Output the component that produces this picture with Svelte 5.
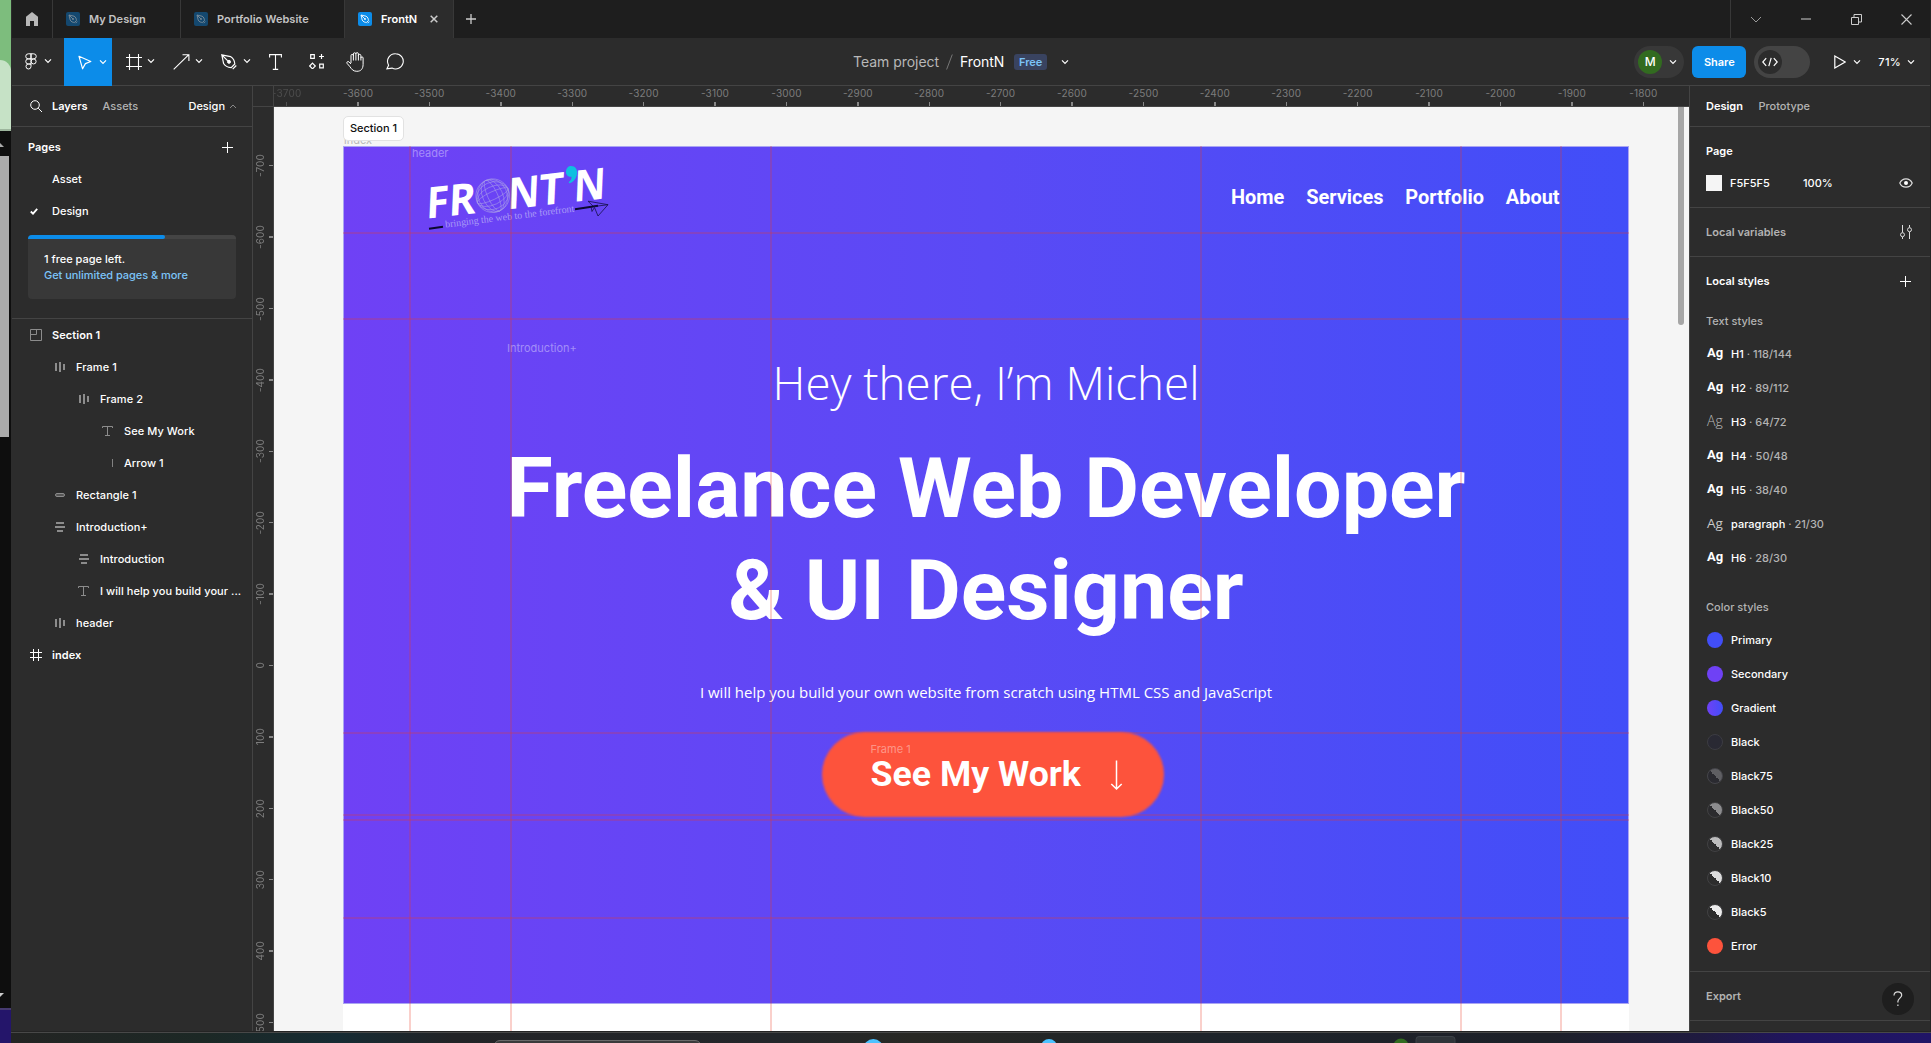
<script>
  const tabs = [
    { name: 'My Design', cls: 't1' },
    { name: 'Portfolio Website', cls: 't2' },
    { name: 'FrontN', cls: 't3', active: true }
  ];
  const layers = [
    { name: 'Section 1', icon: 'section', depth: 0, bold: true },
    { name: 'Frame 1', icon: 'cols', depth: 1 },
    { name: 'Frame 2', icon: 'cols', depth: 2 },
    { name: 'See My Work', icon: 'text', depth: 3 },
    { name: 'Arrow 1', icon: 'line', depth: 3 },
    { name: 'Rectangle 1', icon: 'rect', depth: 1 },
    { name: 'Introduction+', icon: 'rows', depth: 1 },
    { name: 'Introduction', icon: 'rows', depth: 2 },
    { name: 'I will help you build your ...', icon: 'text', depth: 2 },
    { name: 'header', icon: 'cols', depth: 1 },
    { name: 'index', icon: 'frame', depth: 0, bold: true }
  ];
  const textStyles = [
    { name: 'H1', size: '118/144', w: 'bold' },
    { name: 'H2', size: '89/112', w: 'bold' },
    { name: 'H3', size: '64/72', w: 'light' },
    { name: 'H4', size: '50/48', w: 'bold' },
    { name: 'H5', size: '38/40', w: 'bold' },
    { name: 'paragraph', size: '21/30', w: 'regular' },
    { name: 'H6', size: '28/30', w: 'bold' }
  ];
  const colors = [
    ['Primary', 'primary'], ['Secondary', 'secondary'], ['Gradient', 'gradient'], ['Black', 'black'],
    ['Black75', 'half b75'], ['Black50', 'half b50'], ['Black25', 'half b25'], ['Black10', 'half b10'],
    ['Black5', 'half b5'], ['Error', 'error']
  ];
  const hTicks = Array.from({ length: 20 }, (_, i) => -3700 + i * 100);
  const vTicks = Array.from({ length: 13 }, (_, i) => -700 + i * 100);
  const vGuides = [409.5, 510.5, 770.5, 1200.5, 1460.5, 1560.5];
  const hGuides = [232, 318, 732, 814, 819, 917];
</script>

{#snippet chev()}
  <svg class="chev" width="8" height="6" viewBox="0 0 8 6"><path d="M1 1.3 4 4.3 7 1.3" /></svg>
{/snippet}

<div class="screen">
  <div class="behind">
    <div class="green"><div class="blob"></div></div>
    <div class="dark1"><svg width="11" height="26"><path d="M0 12 4 16H0Z" fill="#aaa" /></svg></div>
    <div class="grey"></div>
    <div class="dark2"><svg width="11" height="20"><path d="M0 2H4L0 6Z" fill="#ccc" /></svg></div>
    <div class="violet"></div>
  </div>

  <div class="app">
    <div class="titlebar">
      <div class="home">
        <svg width="12" height="14" viewBox="0 0 12 14"><path d="M6 0 12 4.8V14H8V9H4V14H0V4.800Z" fill="#b8b8b8" /></svg>
      </div>
      {#each tabs as t}
        <div class="tab {t.cls}" class:active={t.active}>
          <svg class="fileicon" width="14" height="14" viewBox="0 0 14 14">
            <rect width="14" height="14" rx="2" class="fi-bg" />
            <path class="fi-pen" d="M3 3 8 4.200C9.800 5 10.500 7 10.400 8.600L8.600 10.400C7 10.500 5 9.800 4.200 8ZM3.200 3.200 6.800 6.800M9.600 11.200 11.200 9.600" />
            <circle cx="7" cy="7" r=".9" class="fi-dot" />
          </svg>
          <span>{t.name}</span>
          {#if t.active}
            <svg class="close" width="8" height="8" viewBox="0 0 8 8"><path d="M.7.7 7.300 7.300M7.300.7.7 7.300" stroke="#ccc" stroke-width="1.500" /></svg>
          {/if}
        </div>
      {/each}
      <div class="newtab"><svg width="10" height="10"><path d="M5 0V10M0 5H10" stroke="#ccc" stroke-width="1.300" /></svg></div>
      <div class="winctl">
        <span><svg width="12" height="7"><path d="M1 1 6 6 11 1" fill="none" stroke="#999" /></svg></span>
        <span><svg width="10" height="2"><path d="M0 1H10" stroke="#ccc" /></svg></span>
        <span><svg width="11" height="11"><path d="M.5 3.500H7.500V10.500H.5ZM3 3V.5H10.500V8H8" fill="none" stroke="#ccc" /></svg></span>
        <span><svg width="11" height="11"><path d="M.5.5 10.500 10.500M10.500.5.5 10.500" stroke="#ccc" stroke-width="1.100" /></svg></span>
      </div>
    </div>

    <div class="toolbar">
      <div class="tools">
        <div class="tool wide">
          <svg width="12" height="17" viewBox="0 0 12 17"><path d="M6 .8H3.300a2.400 2.400 0 0 0 0 5.100H6ZM6 .8H8.700a2.400 2.400 0 0 1 0 5.100H6ZM6 5.900H3.300a2.400 2.400 0 0 0 0 5.100H6ZM6 11H3.300A2.500 2.500 0 1 0 6 13.500Z" /><circle cx="8.600" cy="8.450" r="2.500" /></svg>
          {@render chev()}
        </div>
        <div class="tool sel">
          <svg width="14" height="15" viewBox="0 0 14 15"><path d="M1 1.300 12.800 6.500 7.400 8.600 4.600 13.800Z" stroke-linejoin="round" stroke-width="1.200" /></svg>
          {@render chev()}
        </div>
        <div class="tool frame">
          <svg width="16" height="16" viewBox="0 0 16 16"><path d="M3.500 0V16M12.500 0V16M0 3.500H16M0 12.500H16" stroke-width="1.100" /></svg>
          {@render chev()}
        </div>
        <div class="tool">
          <svg width="17" height="16" viewBox="0 0 17 16"><path d="M.7 15.300 15.800.7M9.500.7H15.900V7" stroke-width="1.100" /></svg>
          {@render chev()}
        </div>
        <div class="tool">
          <svg width="16" height="16" viewBox="0 0 16 16"><path d="M.8.8 9.500 2.600C12.300 4.200 13.600 7.200 13.800 10L10.200 13.600C7.300 13.400 4.200 12.300 2.600 9.500ZM.8.8 6.800 6.800M15.300 11.500 11.700 15.100" stroke-width="1.200" /><circle cx="8" cy="7.800" r="1.500" fill="#fff" /></svg>
          {@render chev()}
        </div>
        <div class="tool one"><svg width="13" height="16" viewBox="0 0 13 16"><path d="M.6 3.500V.6H12.400V3.500M6.500.6V15.400M3.800 15.400H9.200" stroke-width="1.100" /></svg></div>
        <div class="tool one res"><svg width="16" height="15" viewBox="0 0 16 15"><path d="M1.700.7H5.300V4.300H1.700ZM10.700 10.200H14.300V13.800H10.700ZM3.500 9.200 6.300 12 3.500 14.800.7 12ZM12.500 0V5M10 2.500H15" stroke-width="1.200" /></svg></div>
        <div class="tool one"><svg width="18" height="20" viewBox="0 0 18 20"><path d="M5 11V3.600a1.150 1.150 0 0 1 2.400 0V2a1.200 1.200 0 0 1 2.500 0V1.900a1.200 1.200 0 0 1 2.500 0V3.500a1.150 1.150 0 0 1 2.500.2V6a1.100 1.100 0 0 1 2.200 0V12.500C17 16.800 15 19.300 10.800 19.300 7 19.300 5.500 17 4 14.800L1 11.300C.3 10 1.900 9 3 9.900L5 12M7.400 3V8.500M9.900 2V8.500M12.400 3V8.500M14.900 6V8.500" /></svg></div>
        <div class="tool one"><svg width="18" height="17" viewBox="0 0 18 17"><path d="M9.600.7A7.650 7.650 0 1 1 6 15.100L.9 15.900 2.600 12.200A7.650 7.650 0 0 1 9.600.7Z" stroke-width="1.100" /></svg></div>
      </div>
      <div class="crumb">
        <span class="team">Team project</span><svg class="slash" width="7" height="16"><path d="M.6 15.500 6.300.5" stroke="#777" fill="none" /></svg><span class="file">FrontN</span><span class="free">Free</span>{@render chev()}
      </div>
      <div class="actions">
        <div class="user"><span class="avatar">M</span>{@render chev()}</div>
        <div class="share">Share</div>
        <div class="devmode"><span class="knob"><svg width="16" height="10" viewBox="0 0 16 10"><path d="M4.200 1.200.8 5 4.200 8.800M11.800 1.200 15.200 5 11.800 8.800M9.200.8 6.800 9.200" stroke-width="1.200" /></svg></span></div>
        <div class="play"><svg width="12" height="14" viewBox="0 0 12 14"><path d="M.8 1 11.200 7 .8 13Z" stroke-width="1.200" /></svg>{@render chev()}</div>
        <div class="zoom"><span>71%</span>{@render chev()}</div>
      </div>
    </div>

    <div class="main">
      <aside class="left">
        <div class="lhead">
          <svg width="13" height="13" viewBox="0 0 13 13"><circle cx="5" cy="5" r="4.300" /><path d="M8.200 8.200 12 12" /></svg>
          <span class="b">Layers</span><span class="dim b assets">Assets</span>
          <span class="pg">Design<svg width="8" height="5"><path d="M1 4 4 1 7 4" stroke="#888" fill="none" /></svg></span>
        </div>
        <div class="pages">
          <div class="phead"><span>Pages</span><svg width="11" height="11"><path d="M5.500 0V11M0 5.500H11" /></svg></div>
          <div class="page"><span>Asset</span></div>
          <div class="page"><svg width="8" height="7"><path d="M.8 3.500 3 5.700 7.200.8" stroke-width="1.800" /></svg><span>Design</span></div>
          <div class="card">
            <div class="bar"><div class="fill"></div></div>
            <p>1 free page left.</p>
            <p class="link">Get unlimited pages &amp; more</p>
          </div>
        </div>
        <div class="layers">
          {#each layers as l}
            <div class="layer d{l.depth}" class:bold={l.bold}>
              <svg class="li" width="12" height="12" viewBox="0 0 12 12">
                {#if l.icon === 'section'}<path d="M.5.5H11.500V11.500H.5ZM6.500.5V5.500H.5" />
                {:else if l.icon === 'cols'}<path d="M2 2V10M6 1V11M10 3V9" stroke-width="2" />
                {:else if l.icon === 'rows'}<path d="M2 2H10M1 6H11M3 10H9" stroke-width="2" />
                {:else if l.icon === 'text'}<path d="M.5 3V1.500H10.500V3M5.500 1.500V10.500M3 10.500H8" />
                {:else if l.icon === 'line'}<path d="M10.500 2V10" stroke-width=".9" />
                {:else if l.icon === 'rect'}<rect x="1.500" y="4.500" width="9" height="3" rx="1.500" fill="#555" />
                {:else}<path class="white" d="M3.500 0V12M8.500 0V12M0 3.500H12M0 8.500H12" />{/if}
              </svg>
              <span>{l.name}</span>
            </div>
          {/each}
        </div>
      </aside>

      <div class="work">
        <div class="hruler">
          <div class="corner"></div>
          <div class="hticks">
            {#each hTicks as n}<div class="ht" class:faded={n === -3700}><span>{n}</span><i></i></div>{/each}
          </div>
        </div>
        <div class="wrow">
          <div class="vruler">
            {#each vTicks as n}<div class="vt"><span>{n}</span><i></i></div>{/each}
          </div>
          <div class="canvas">
            <span class="lbl index">index</span>
            <span class="chip">Section 1</span>
            <div class="paper"></div>
            <div class="hero">
              <span class="lbl hdr">header</span>
              <span class="lbl intro">Introduction+</span>
              <svg class="logo" width="190" height="76" viewBox="420 158 190 76">
                <g class="word" transform="translate(429.200 218.300) rotate(-6.500) skewX(-9)">
                  <text x="-3.500" y="0" textLength="50" lengthAdjust="spacingAndGlyphs">FR</text>
                  <text x="78.500" y="0" textLength="32" lengthAdjust="spacingAndGlyphs">N</text>
                  <text x="110" y="0" textLength="25" lengthAdjust="spacingAndGlyphs">T</text>
                  <text x="145" y="0" textLength="32" lengthAdjust="spacingAndGlyphs">N</text>
                </g>
                <path d="M571 166C575.500 166 577.500 169.500 577 173.500 576.500 178.500 573.500 182 569.500 183.200L568.600 182.300C571 180.500 571.800 178.500 571.500 176.800 568.500 177.200 565.800 175 566 171.500 566.200 168 568.500 166 571 166Z" fill="#0fbfe0" />
                <g class="globe" transform="rotate(-25 492.700 195.700)">
                  <circle cx="492.700" cy="195.700" r="16.800" />
                  <ellipse cx="492.700" cy="195.700" rx="5" ry="16.800" /><ellipse cx="492.700" cy="195.700" rx="10" ry="16.800" /><ellipse cx="492.700" cy="195.700" rx="14.500" ry="16.800" />
                  <ellipse cx="492.700" cy="195.700" rx="16.800" ry="4" /><ellipse cx="492.700" cy="195.700" rx="16.800" ry="9" /><ellipse cx="492.700" cy="195.700" rx="16.800" ry="13.500" />
                </g>
                <text class="tag" transform="translate(445.500 227.500) rotate(-7)" textLength="130">bringing the web to the forefront</text>
                <path d="M429 228.700 443 226.700M575 209.300 598 205.800" stroke="#0b0930" stroke-width="2" />
                <path d="M594 206.500 608 204.700 598 216 594.500 207.500 592 211.500 591 206.500M588 201.200 608 204.700M588 201.200 593 206" stroke="#15104a" stroke-width=".8" fill="none" />
              </svg>
              <nav><span>Home</span><span>Services</span><span>Portfolio</span><span>About</span></nav>
              <div class="hey">Hey there, I’m Michel</div>
              <h1>Freelance Web Developer<br />&amp; UI Designer</h1>
              <div class="para">I will help you build your own website from scratch using HTML CSS and JavaScript</div>
            </div>
            <svg class="guides" width="1415" height="924" viewBox="274 107 1415 924">
              {#each vGuides as x}<path d="M{x + 0.5} 146V1031" />{/each}
              {#each hGuides as y}<path d="M343 {y + 1}H1629" />{/each}
            </svg>
            <div class="pill"></div>
            <span class="lbl f1">Frame 1</span>
            <div class="cta">See My Work</div>
            <svg class="down" width="14" height="32" viewBox="0 0 14 32"><path d="M6.500.5V29M1.300 24 6.500 29 11.700 24" fill="none" stroke="#fff" stroke-width="1.500" /></svg>
            <div class="scroll"></div>
          </div>
        </div>
      </div>

      <aside class="right">
        <div class="rhead"><span class="b">Design</span><span class="b dim">Prototype</span></div>
        <div class="sec">
          <div class="row b">Page</div>
          <div class="row fillrow"><i class="sw"></i><span class="hex">F5F5F5</span><span>100%</span>
            <svg class="eye" width="14" height="10" viewBox="0 0 14 10"><path d="M.8 5C2 2.300 4.300.8 7 .8S12 2.300 13.200 5C12 7.700 9.700 9.200 7 9.200S2 7.700.8 5Z" stroke-width="1.200" /><circle cx="7" cy="5" r="2" fill="#fff" stroke="none" /></svg>
          </div>
        </div>
        <div class="sec">
          <div class="row b dim">Local variables
            <svg width="12" height="14" viewBox="0 0 12 14"><path d="M2.500 0V7.500M2.500 12V14M9.500 0V2.500M9.500 7V14" /><circle cx="2.500" cy="9.700" r="2" /><circle cx="9.500" cy="4.700" r="2" /></svg>
          </div>
        </div>
        <div class="sec">
          <div class="row b">Local styles<svg class="plus" width="11" height="11"><path d="M5.500 0V11M0 5.500H11" stroke="#fff" /></svg></div>
          <div class="row dim sub">Text styles</div>
          {#each textStyles as s}
            <div class="style"><span class="ag {s.w}">Ag</span><span>{s.name}<em>{`\u00a0· ${s.size}`}</em></span></div>
          {/each}
          <div class="row dim sub2">Color styles</div>
          {#each colors as [n, c]}
            <div class="style"><i class="dot {c}"></i><span>{n}</span></div>
          {/each}
        </div>
        <div class="sec"><div class="row b dim">Export</div></div>
        <div class="help"><svg width="10" height="16" viewBox="0 0 10 16"><path d="M1 4.500C1 2 2.600.8 4.800.8S8.700 2.200 8.700 4.300C8.700 7 4.900 7.300 4.900 10.500V11.500M4.900 13.500V15" stroke-width="1.200" /></svg></div>
      </aside>
    </div>
  </div>

  <div class="taskbar">
    <svg width="1931" height="11" viewBox="0 1032 1931 11">
      <rect x="494" y="1040.500" width="207" height="14" rx="6" fill="#3a3a3b" stroke="#6a6a6a" />
      <circle cx="873.300" cy="1049" r="10" fill="#4cc2ff" /><circle cx="1049" cy="1047" r="8" fill="#4cc2ff" />
      <circle cx="1401" cy="1046" r="7.500" fill="#326b20" />
      <rect x="1416" y="1036.500" width="39" height="14" rx="3" fill="#2f3439" stroke="#3c4147" />
    </svg>
  </div>
</div>

<style>
  :global(body) { margin: 0; background: #1e1e1e; }
  * { box-sizing: border-box; }
  .screen { width: 1931px; height: 1043px; overflow: hidden; position: relative; display: grid; grid-template: 1032px 11px / 11px 1920px; background: #232323; font: 500 11px/16px Inter, sans-serif; letter-spacing: 0; color: #fff; }
  svg { display: block; flex: none; fill: none; stroke: none; }
  .behind { grid-row: 1 / 3; display: flex; flex-direction: column; background: #0e0e0e; }
  .green { height: 131px; background: #7dbd7d; padding-top: 60px; border-bottom: 2px solid #9db69d; overflow: hidden; }
  .blob { height: 71px; background: #c6e2c6; border-top-right-radius: 11px; }
  .dark1 { height: 25px; }
  .grey { height: 281px; width: 9px; background: #ababab; }
  .dark2 { height: 571px; padding-top: 554px; overflow: hidden; }
  .violet { flex: 1; background: #24156a; border-top: 2px solid #463a70; }
  .app { display: flex; flex-direction: column; background: #2c2c2c; border-left: 1px solid #2c2c2c; border-right: 1px solid #232323; border-bottom: 1px solid #242424; min-width: 0; }

  .titlebar { height: 38px; background: #1e1e1e; display: flex; flex: none; color: #c4c4c4; }
  .home { width: 41px; border-right: 1px solid #383838; display: grid; place-items: center; }
  .tab { display: flex; align-items: center; padding-left: 13px; border-right: 1px solid #383838; font-weight: 600; letter-spacing: .04px; }
  .tab span { margin-left: 9px; white-space: nowrap; }
  .t1 { width: 128px; }
  .t2 { width: 164px; }
  .t3 { width: 109px; background: #2c2c2c; color: #fff; }
  .close { margin-left: 13px; }
  .fi-bg { fill: #14486f; }
  .fi-pen { stroke: #7d8c98; stroke-width: .9; }
  .fi-dot { fill: #7d8c98; }
  .active .fi-bg { fill: #0c8ce9; }
  .active .fi-pen { stroke: #fff; }
  .active .fi-dot { fill: #fff; }
  .newtab { padding: 14px 12px; }
  .winctl { margin-left: auto; display: flex; border-left: 1px solid #383838; width: 200px; }
  .winctl span { width: 50px; display: grid; place-items: center; flex: none; }

  .toolbar { height: 48px; border-bottom: 1px solid #444; display: flex; flex: none; position: relative; }
  .toolbar svg { stroke: #fff; }
  .chev { stroke-width: 1.200; }
  .tools { display: flex; }
  .tool { width: 48px; display: flex; align-items: center; padding-left: 13px; }
  .tool .chev { margin-left: auto; margin-right: 5px; margin-top: -1px; }
  .tool.frame { padding-left: 14px; }
  .tool.wide { width: 52px; padding-left: 13px; }
  .tool.wide .chev { margin-right: 12px; }
  .sel { background: #0c8ce9; height: 48px; padding-left: 14px; }
  .tool.one { width: 40px; padding: 0 2px 0 0; justify-content: center; }
  .tool.one.res { padding: 0 0 0 1px; }
  .crumb { display: flex; align-items: center; margin-left: 437px; font-size: 14px; font-weight: 400; letter-spacing: -.1px; }
  .team { color: #b8b8b8; width: 86px; white-space: nowrap; letter-spacing: -.03px; }
  .slash { margin: 0 7px; }
  .free { background: #394360; color: #7cc4f8; border-radius: 3px; font-size: 11px; font-weight: 600; width: 33px; height: 16px; text-align: center; margin: 0 14px 0 10px; }
  .actions { margin-left: auto; display: flex; align-items: center; margin-right: 15px; }
  .user { width: 50px; height: 32px; border-radius: 16px; background: #383838; padding: 4px; display: flex; align-items: center; gap: 7px; }
  .avatar { width: 24px; height: 24px; border-radius: 50%; background: #326b20; display: grid; place-items: center; font-size: 12px; }
  .share { width: 54px; height: 32px; border-radius: 6px; background: #0c8ce9; display: grid; place-items: center; font-weight: 600; margin: 0 8px; }
  .devmode { width: 56px; height: 32px; border-radius: 16px; background: #444; padding: 4px; }
  .knob { width: 24px; height: 24px; border-radius: 50%; background: #2c2c2c; display: grid; place-items: center; }
  .play { display: flex; align-items: center; gap: 7px; margin-left: 24px; }
  .zoom { display: flex; align-items: center; gap: 6px; margin-left: 17px; letter-spacing: .3px; }

  .main { flex: 1; display: flex; min-height: 0; }
  .left { width: 241px; border-right: 1px solid #444; flex: none; }
  .left svg { stroke: #fff; }
  .b { font-weight: 600; }
  .dim { color: #b3b3b3; }
  .lhead { height: 41px; border-bottom: 1px solid #444; display: flex; align-items: center; padding-left: 18px; }
  .lhead > .b:first-of-type { margin-left: 9px; }
  .lhead > .assets { margin-left: 15px; font-weight: 500; }
  .pg { margin-left: auto; margin-right: 15px; display: flex; align-items: center; gap: 4px; }
  .pages { height: 192px; border-bottom: 1px solid #444; padding-top: 4px; }
  .phead { height: 32px; display: flex; align-items: center; justify-content: space-between; padding: 0 19px 0 16px; font-weight: 600; }
  .page { height: 32px; display: flex; align-items: center; position: relative; padding-left: 18px; }
  .page span { margin-left: auto; width: 200px; }
  .card { margin: 8px 16px 0; height: 64px; border-radius: 4px; background: #383838; overflow: hidden; padding-left: 16px; }
  .bar { height: 4px; background: #444; margin-left: -16px; margin-bottom: 12px; }
  .fill { width: 137px; height: 4px; background: #0c8ce9; border-radius: 0 2px 2px 0; }
  p { margin: 0; white-space: nowrap; }
  .link { color: #7cc4f8; letter-spacing: -.04px; }
  .layer { height: 32px; display: flex; align-items: center; padding-left: 18px; gap: 10px; white-space: nowrap; letter-spacing: .06px; }
  .left .li { stroke: #8c8c8c; }
  .left .li .white { stroke: #fff; }
  .bold { font-weight: 600; }
  .d1 { padding-left: 42px; }
  .d2 { padding-left: 66px; }
  .d3 { padding-left: 90px; }

  .work { flex: 1; min-width: 0; display: flex; flex-direction: column; }
  .hruler { height: 21px; display: flex; border-bottom: 1px solid #444; overflow: hidden; flex: none; color: #7c7c7c; font-weight: 400; }
  .corner { width: 21px; border-right: 1px solid #444; flex: none; }
  .hticks { display: flex; overflow: hidden; flex: 1; }
  .ht { width: 71.420px; flex: none; display: flex; flex-direction: column; align-items: center; }
  .ht:first-child { margin-left: -23.100px; }
  .ht span { font-size: 10px; line-height: 15px; letter-spacing: .15px; height: 16px; }
  .ht i { width: 1.400px; height: 4px; background: #888; }
  .faded { opacity: .4; }
  .wrow { flex: 1; display: flex; min-height: 0; }
  .vruler { width: 21px; border-right: 1px solid #444; padding-top: 23px; overflow: hidden; color: #7c7c7c; font-weight: 400; flex: none; }
  .vt { height: 71.420px; display: flex; align-items: center; justify-content: space-between; }
  .vt span { writing-mode: vertical-rl; transform: rotate(180deg); font-size: 10px; line-height: 15px; letter-spacing: .15px; }
  .vt i { height: 1.400px; width: 4px; background: #888; }

  /* free-form design canvas: items are placed at their canvas coordinates */
  .canvas { flex: 1; position: relative; background: #f5f5f5; overflow: hidden; }
  .canvas > *, .hero > * { position: absolute; }
  .lbl { white-space: nowrap; font-weight: 400; font-size: 11px; line-height: 14px; color: rgba(255, 255, 255, .4); }
  .index { left: 70px; top: 26px; color: #b8b8b8; }
  .chip { left: 69px; top: 9px; width: 61px; height: 25px; border: 1px solid #e2e2e2; border-radius: 5px; background: #fff; color: #111; font-size: 11px; line-height: 23px; text-align: center; font-weight: 500; }
  .paper { left: 69px; top: 890px; width: 1286px; height: 40px; background: #fff; }
  .hero { left: 69px; top: 38.500px; width: 1286px; height: 858px; background: linear-gradient(90deg, #6f41f5, #5a4af5 50%, #414ef8); border: 1px solid #aaa5f2; }
  .hdr { left: 68px; top: -1px; }
  .intro { left: 163px; top: 194px; }
  .logo { left: 76px; top: 11px; overflow: visible; }
  .word { fill: #fff; font: 700 43px "Open Sans", sans-serif; }
  .globe { stroke: #a79be8; stroke-width: .55; }
  .tag { fill: #a99af5; font: 400 10px "Liberation Serif", serif; }
  nav { left: 887px; top: 38px; display: flex; gap: 21.800px; font: 700 19.950px/24px Roboto, sans-serif; }
  .hey { left: 0; right: 0; top: 205px; text-align: center; font: 300 45.700px/60px "Open Sans", sans-serif; }
  h1 { margin: 0; left: 0; right: 0; top: 291px; text-align: center; font: 700 84.300px/102.900px Roboto, sans-serif; }
  .para { left: 0; right: 0; top: 535.500px; text-align: center; font: 400 15px/21px "Open Sans", sans-serif; }
  .guides { left: 0; top: 0; stroke: rgba(232, 60, 40, .32); stroke-width: 1.500; }
  .pill { left: 548px; top: 624.500px; width: 342px; height: 85px; border-radius: 43px; background: #fd533c; filter: blur(1px); }
  .f1 { left: 596.500px; top: 635px; }
  .cta { left: 596.500px; top: 646px; font: 700 35.700px/42px Roboto, sans-serif; white-space: nowrap; }
  .down { left: 836px; top: 653px; }
  .scroll { left: 1404px; top: -10px; width: 6px; height: 228px; border-radius: 3px; background: #a6a6a6; }

  .right { width: 241px; border-left: 1px solid #444; flex: none; position: relative; }
  .right svg { stroke: #ddd; }
  .rhead { height: 41px; border-bottom: 1px solid #444; padding-left: 16px; display: flex; align-items: center; gap: 15.500px; }
  .rhead .dim { font-weight: 500; }
  .sec { border-bottom: 1px solid #444; padding: 8px 18px 8px 16px; }
  .row { height: 32px; display: flex; align-items: center; }
  .row svg { margin-left: auto; }
  .row .plus { margin-right: 1px; }
  .row .eye { margin-right: -1px; }
  .sw { width: 16px; height: 16px; background: #f5f5f5; }
  .hex { width: 73px; margin-left: 8px; }
  .sub { margin-top: 8px; }
  .sub2 { margin-top: 16px; }
  .style { height: 34px; display: flex; align-items: center; padding-left: 1px; gap: 8px; }
  .style em { font-style: normal; color: #b3b3b3; }
  .ag { width: 16px; font: 700 13px/16px Roboto, sans-serif; margin-top: -2px; }
  .ag.light { font: 300 14px/16px "Open Sans", sans-serif; color: #bbb; }
  .ag.regular { font: 400 13.500px/16px "Open Sans", sans-serif; color: #c8c8c8; }
  .dot { width: 16px; height: 16px; border-radius: 50%; }
  .primary { background: #414ef8; }
  .secondary { background: #6f41f5; }
  .gradient { background: linear-gradient(90deg, #6f41f5, #414ef8); }
  .black { background: #292933; border: 1px solid #3c3c42; }
  .half { border: 1px solid #414143; }
  .b75 { background: linear-gradient(45deg, #2a2a30 50%, #5f5f63 50%); border-color: #45454a; }
  .b50 { background: linear-gradient(45deg, #2b2b2e 50%, #8c8c8e 50%); }
  .b25 { background: linear-gradient(45deg, #2c2c2d 50%, #bcbcbd 50%); }
  .b10 { background: linear-gradient(45deg, #2c2c2c 50%, #dcdcdc 50%); }
  .b5 { background: linear-gradient(45deg, #2c2c2c 50%, #ececec 50%); }
  .error { background: #fd533c; }
  .help { position: absolute; right: 16px; top: 897px; width: 32px; height: 32px; border-radius: 50%; background: #1e1e1e; display: grid; place-items: center; }
  .taskbar { grid-column: 2; grid-row: 2; border-top: 1px solid #484848; background: linear-gradient(90deg, #232423, #1c2825 10%, #162b33 17%, #222326 23%, #23262a 40%, #282824 47%, #1e242a 62%, #1d2028 80%, #1f1a40 88%, #20145f 93%, #201566); overflow: hidden; }
  .taskbar svg { margin-left: -11px; margin-top: -1px; }
</style>
